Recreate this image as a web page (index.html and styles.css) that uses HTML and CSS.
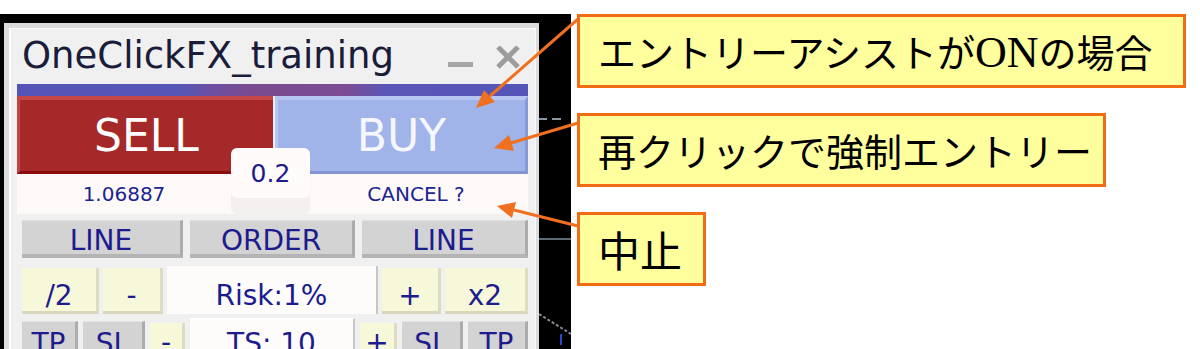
FILE: index.html
```html
<!DOCTYPE html>
<html lang="ja">
<head>
    <meta charset="UTF-8">
    <meta name="viewport" content="width=device-width, initial-scale=1.0">
    <title>OneClickFX エントリーアシスト</title>
    <link rel="stylesheet" href="styles.css">
</head>
<body>

    <div class="page">
        <!-- MT4 terminal -->
        <div class="terminal">
            <div class="topline"></div>
            <div class="window">
                <div class="panel">
                    <div class="panel-inner">
                        <div class="title-row">
                            <span class="title">OneClickFX_training</span>
                            <svg class="win-ctrl" width="72" height="23" viewBox="0 0 72 23">
                                <rect x="0" y="16" width="25" height="5" fill="#a6a6a6"/>
                                <path d="M50 1 L70 21 M70 1 L50 21" stroke="#9c9c9c" stroke-width="5" fill="none"/>
                            </svg>
                        </div>

                        <div class="color-bar"></div>

                        <div class="trade">
                            <div class="btn-sell">SELL</div>
                            <div class="btn-buy">BUY</div>
                            <div class="lot">0.2</div>
                        </div>

                        <div class="price-row">
                            <span class="price">1.06887</span>
                            <span class="cancel">CANCEL ?</span>
                        </div>

                        <div class="row row-line">
                            <div class="btn gray">LINE</div>
                            <div class="btn gray">ORDER</div>
                            <div class="btn gray">LINE</div>
                        </div>

                        <div class="row row-risk">
                            <div class="btn yellow">/2</div>
                            <div class="btn yellow">-</div>
                            <div class="btn field">Risk:1%</div>
                            <div class="btn yellow">+</div>
                            <div class="btn yellow">x2</div>
                        </div>

                        <div class="row row-ts">
                            <div class="btn gray">TP</div>
                            <div class="btn gray">SL</div>
                            <div class="btn yellow">-</div>
                            <div class="btn field">TS: 10</div>
                            <div class="btn yellow">+</div>
                            <div class="btn gray">SL</div>
                            <div class="btn gray">TP</div>
                        </div>
                    </div>
                </div>

                <!-- chart -->
                <div class="chart">
                    <svg width="32" height="322" viewBox="0 0 32 322">
                        <path d="M0 96 H8 M13 96 H22" stroke="#8a96a4" stroke-width="2"/>
                        <path d="M0 216 H32" stroke="#5c6a78" stroke-width="2"/>
                        <path d="M0 291 L32 311" stroke="#8c8c8c" stroke-width="2" stroke-dasharray="3 2"/>
                        <path d="M22 311 V322" stroke="#2848c8" stroke-width="2"/>
                    </svg>
                </div>
            </div>
        </div>

        <!-- callouts -->
        <div class="notes">
            <div class="note note-wide">エントリーアシストが<span class="latin">ON</span>の場合</div>
            <div class="note note-mid">再クリックで強制エントリー</div>
            <div class="note note-short">中止</div>
        </div>

        <svg class="arrows" width="1200" height="349" viewBox="0 0 1200 349">
            <g stroke="#f07020" stroke-width="3" fill="#f07020">
                <line x1="578" y1="19" x2="490" y2="96"/>
                <polygon points="476,108 495,102 484,90" stroke="none"/>
                <line x1="578" y1="123" x2="511" y2="143"/>
                <polygon points="494,148 514,151 509,135" stroke="none"/>
                <line x1="578" y1="226" x2="514" y2="210"/>
                <polygon points="497,206 516,202 512,218" stroke="none"/>
            </g>
        </svg>
    </div>

</body>
</html>
```

FILE: styles.css
```css
/* page */
body {
    margin: 0;
    background-color: #fff;
    font-family: "DejaVu Sans", Verdana, sans-serif;
}

.page {
    position: relative;
    display: flex;
    width: 1200px;
    height: 349px;
    overflow: hidden;
}

/* MT4 terminal */
.terminal {
    width: 571px;
    display: flex;
    flex-direction: column;
    padding-top: 14px;
}

.topline {
    height: 4px;
    background: linear-gradient(#d4e0ec, #aab6c2 60%, #5c646c);
}

.window {
    flex-grow: 1;
    display: flex;
    background-color: #000;
    padding: 9px 0 0 4px;
}

.panel {
    width: 535px;
    flex-shrink: 0;
    background-color: #dcdcdc;
    padding: 5px 3px 0 5px;
    box-sizing: border-box;
}

.panel-inner {
    height: 100%;
    background-color: #f0f0f0;
    border-top: 1px solid #fff;
    border-left: 2px solid #fff;
    border-right: 1px solid #fafafa;
    padding: 0 7px 0 6px;
}

.title-row {
    display: flex;
    align-items: flex-start;
    height: 55px;
}

.title {
    padding-left: 5px;
    font-size: 37px;
    line-height: 53px;
    color: #1a1c3a;
}

.win-ctrl {
    margin-left: auto;
    margin-top: 17px;
    margin-right: 8px;
}

.color-bar {
    height: 12px;
    background: linear-gradient(90deg, #5454b8 0%, #5656b6 32%, #6c4ea2 38%, #7a4a8e 46%, #7c4c94 64%, #5a56b6 72%, #5454b8 100%);
}

/* SELL / BUY */
.trade {
    position: relative;
    display: flex;
    height: 78px;
    gap: 2px;
    font-size: 44px;
}

.btn-sell {
    width: 256px;
    box-sizing: border-box;
    background-color: #a52929;
    border-top: 4px solid #c44848;
    border-left: 3px solid #c24444;
    border-bottom: 3px solid #8a0c0c;
    color: #fff;
    display: flex;
    justify-content: center;
    align-items: center;
}

.btn-buy {
    flex-grow: 1;
    box-sizing: border-box;
    background-color: #a0b4ea;
    border-top: 4px solid #b6c6f2;
    border-left: 3px solid #b6c6f2;
    border-right: 3px solid #8898d6;
    border-bottom: 3px solid #8494d2;
    color: #f6f6ff;
    display: flex;
    justify-content: center;
    align-items: center;
}

.lot {
    position: absolute;
    left: 214px;
    top: 52px;
    width: 79px;
    height: 50px;
    background-color: #fffbfb;
    border-radius: 6px;
    box-shadow: 0 16px 0 #f3efef;
    color: #1c1c8c;
    font-size: 25px;
    display: flex;
    justify-content: center;
    align-items: center;
}

.price-row {
    display: flex;
    height: 40px;
    background-color: #fdf9f9;
    font-size: 20px;
    line-height: 40px;
    color: #1c2490;
}

.price {
    width: 256px;
    box-sizing: border-box;
    padding-right: 42px;
    text-align: center;
}

.cancel {
    flex-grow: 1;
    padding-left: 31px;
    text-align: center;
}

/* button rows */
.row {
    display: flex;
    padding-left: 5px;
}

.btn {
    box-sizing: border-box;
    display: flex;
    justify-content: center;
    align-items: center;
    color: #1c1c8e;
    font-size: 28px;
}

.btn.gray {
    background-color: #d3d3d3;
    border-top: 1px solid #e2e2e2;
    border-right: 3px solid #acacac;
    border-bottom: 4px solid #b4b4b4;
}

.btn.yellow {
    background-color: #f7f7da;
    border-right: 3px solid #dddcc2;
    border-bottom: 3px solid #d9d8bd;
    margin-top: 2px;
}

.btn.field {
    background-color: #fefbfb;
    border-right: 2px solid #c6c6c6;
}

.row-line {
    margin-top: 6px;
    height: 38px;
    gap: 7px;
}

.row-line .btn {
    padding-top: 5px;
}

.row-line .btn:nth-child(1) { width: 161px; }
.row-line .btn:nth-child(2) { width: 165px; }
.row-line .btn:nth-child(3) { flex-grow: 1; }

.row-risk {
    margin-top: 8px;
    height: 48px;
    gap: 4px;
}

.row-risk .btn {
    padding-top: 11px;
}

.row-risk .btn:nth-child(1) { width: 77px; }
.row-risk .btn:nth-child(2) { width: 60px; }
.row-risk .btn:nth-child(3) { width: 211px; }
.row-risk .btn:nth-child(4) { width: 59px; }
.row-risk .btn:nth-child(5) { flex-grow: 1; }

.row-ts {
    margin-top: 7px;
    height: 40px;
    gap: 5px;
}

.row-ts .btn {
    align-items: flex-start;
    padding-top: 2px;
    line-height: 40px;
}

.row-ts .btn.field {
    margin-top: -3px;
    padding-top: 5px;
    border-top: 1px solid #fff;
}

.row-ts .btn.yellow {
    padding-top: 0;
}

.row-ts .btn:nth-child(1) { width: 56px; }
.row-ts .btn:nth-child(2) { width: 62px; }
.row-ts .btn:nth-child(3) { width: 35px; }
.row-ts .btn:nth-child(4) { width: 165px; }
.row-ts .btn:nth-child(5) { width: 37px; }
.row-ts .btn:nth-child(6) { width: 61px; }
.row-ts .btn:nth-child(7) { flex-grow: 1; }

/* chart */
.chart {
    flex-grow: 1;
    background-color: #000;
}

.chart svg {
    display: block;
}

/* callouts */
.notes {
    display: flex;
    flex-direction: column;
    align-items: flex-start;
    gap: 25px;
    padding: 14px 0 0 6px;
    font-family: "Noto Sans CJK JP", sans-serif;
}

.note {
    box-sizing: border-box;
    height: 74px;
    border: 3px solid #f26c14;
    background-color: #ffff9e;
    padding-left: 18px;
    font-size: 38px;
    line-height: 68px;
    white-space: nowrap;
    color: #000;
}

.note-wide { width: 609px; }
.note-mid { width: 529px; }

.note-short {
    width: 129px;
    font-size: 42px;
}

.latin {
    font-family: "Liberation Serif", serif;
    font-size: 44px;
}

.arrows {
    position: absolute;
    top: 0;
    left: 0;
    pointer-events: none;
}
```
